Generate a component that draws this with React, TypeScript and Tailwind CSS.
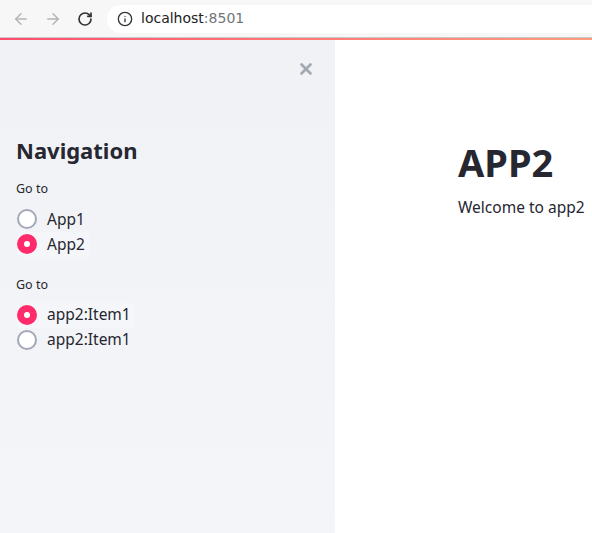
import { ArrowLeft, ArrowRight, RotateCw, Info, X } from 'lucide-react'

const font = { fontFamily: '"Noto Sans", "Liberation Sans", sans-serif' }

function Radio({ label, checked }: { label: string; checked?: boolean }) {
  return (
    <div className={`ml-px flex h-[25px] w-fit items-center gap-[10px] rounded pr-1 ${checked ? 'bg-[#f5f6f9]' : ''}`}>
      {checked ? (
        <span className="flex h-[20px] w-[20px] items-center justify-center rounded-full bg-[#ff2b6a]">
          <span className="h-[6px] w-[6px] rounded-full bg-white" />
        </span>
      ) : (
        <span className="h-[20px] w-[20px] rounded-full border-2 border-[#a3a8b8] bg-white" />
      )}
      <span className="text-[15.5px] text-[#262730]">{label}</span>
    </div>
  )
}

function RadioGroup({ items, selected }: { items: string[]; selected: number }) {
  return (
    <div>
      <div className="mb-[8px] text-[12.5px] text-[#262730]">Go to</div>
      <div className="flex flex-col">
        {items.map((it, i) => (
          <Radio key={i} label={it} checked={i === selected} />
        ))}
      </div>
    </div>
  )
}

export default function App() {
  return (
    <div className="flex h-[533px] w-[592px] flex-col overflow-hidden bg-white" style={font}>
      {/* browser toolbar */}
      <div className="flex h-[37px] items-center bg-[#f7f7f7] pl-[12px]">
        <ArrowLeft size={18} strokeWidth={2} className="text-[#b5b5b5]" />
        <ArrowRight size={18} strokeWidth={2} className="ml-[14px] text-[#b5b5b5]" />
        <RotateCw size={16} strokeWidth={2.5} className="ml-[15px] text-[#333]" />
        <div className="ml-[14px] flex h-[28px] flex-1 items-center rounded-l-full bg-white pl-[10px]">
          <Info size={16} strokeWidth={2} className="text-[#333]" />
          <span className="ml-[8px] text-[#202124]" style={{ fontFamily: '"DejaVu Sans", sans-serif', fontSize: 14 }}>
            localhost<span className="text-[#70757a]">:8501</span>
          </span>
        </div>
      </div>
      <div className="h-px bg-[#c9c9c9]" />
      <div className="h-[2px] bg-gradient-to-r from-[#ff4b6e] to-[#ff9c7e]" />

      <div className="flex flex-1">
        <aside className="flex w-[335px] flex-col bg-gradient-to-b from-[#f0f2f6] to-[#f4f5f8] px-[16px]">
          <div className="flex justify-end pt-[20px] pr-[4px]">
            <X size={18} strokeWidth={3.5} className="text-[#a4a8b2]" />
          </div>
          <h2 className="mt-[56px] text-[22px] font-bold leading-[32px] text-[#262730]">Navigation</h2>
          <div className="mt-[14px]">
            <RadioGroup items={['App1', 'App2']} selected={1} />
          </div>
          <div className="mt-[19px]">
            <RadioGroup items={['app2:Item1', 'app2:Item1']} selected={0} />
          </div>
        </aside>
        <main className="flex-1 pl-[123px] pt-[98px]">
          <h1 className="text-[38px] font-bold leading-[48px] text-[#262730]">APP2</h1>
          <p className="mt-[10px] text-[15.5px] text-[#262730]">Welcome to app2</p>
        </main>
      </div>
    </div>
  )
}
